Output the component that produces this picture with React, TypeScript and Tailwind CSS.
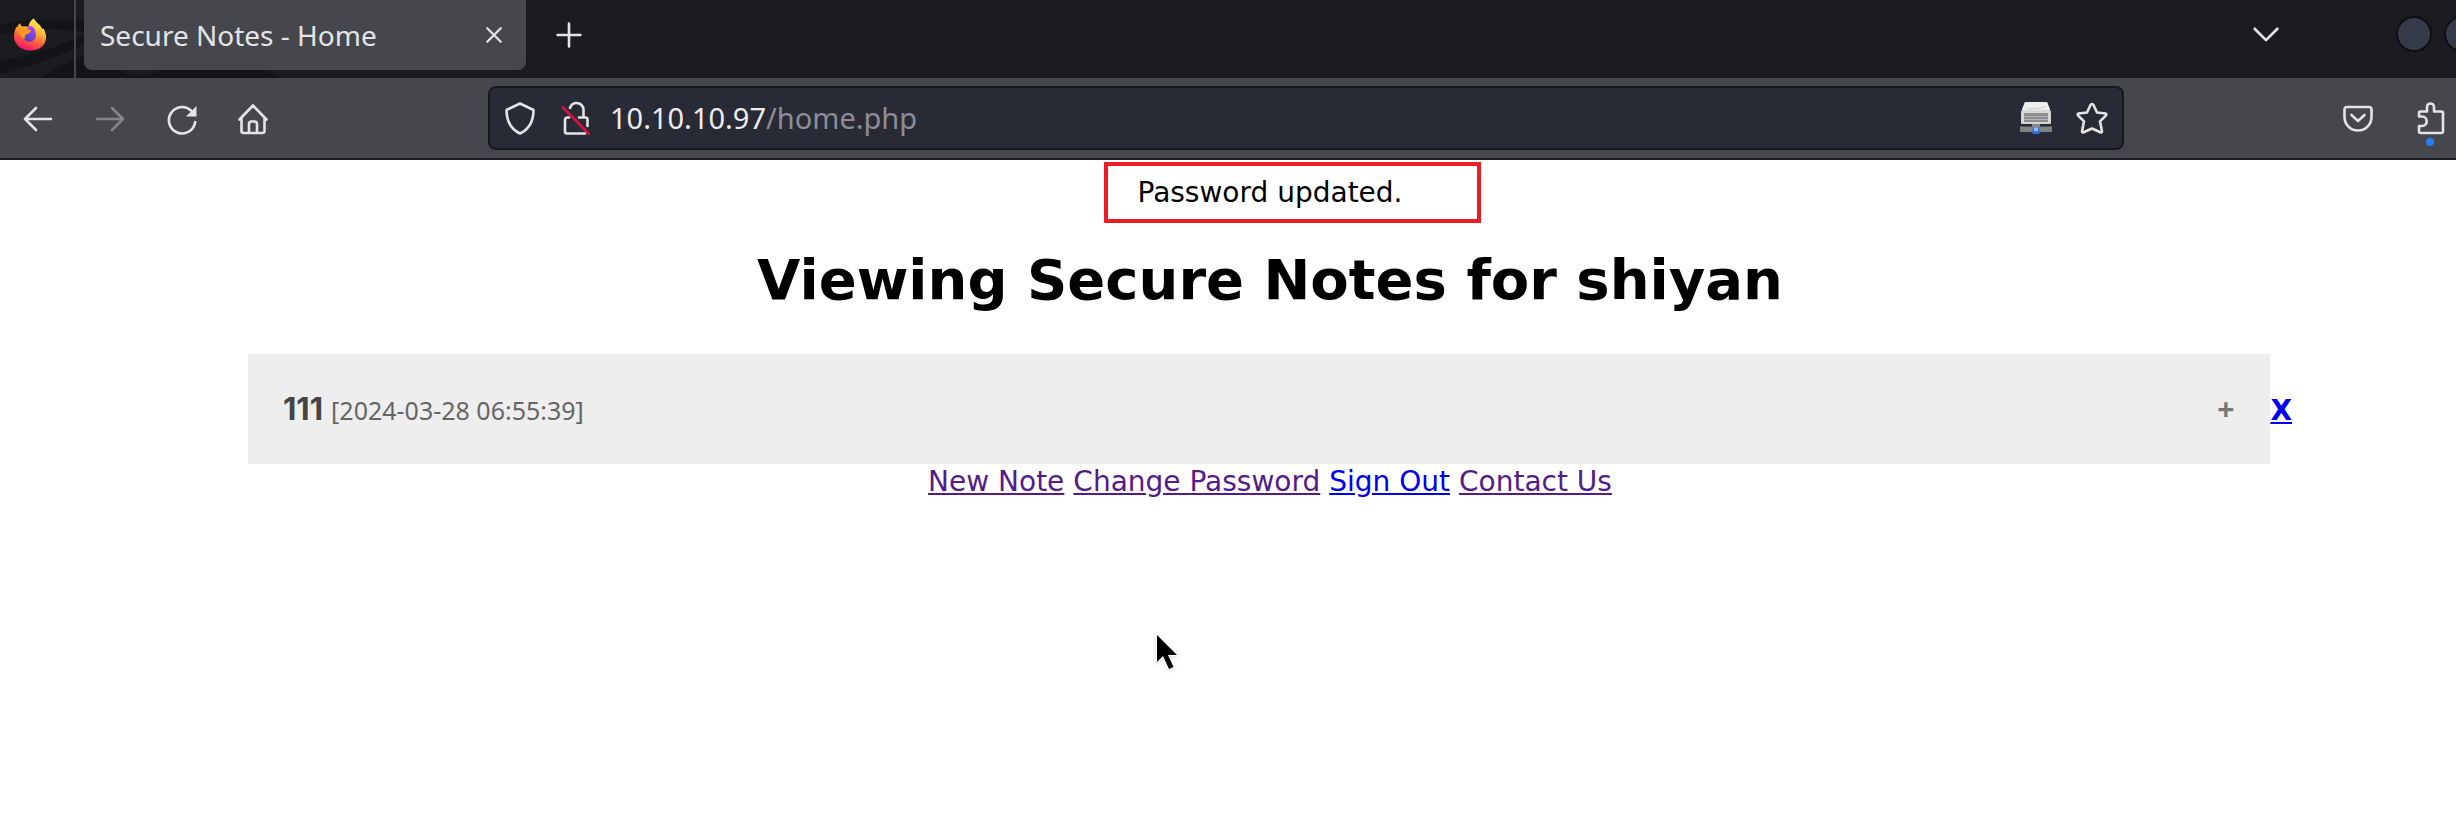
import React from "react";

const iconButton = "flex items-center justify-center text-[#e4e4e5] shrink-0";

function FirefoxLogo() {
  return (
    <svg viewBox="0 0 96 98" className="relative h-[33px] w-8" aria-hidden="true">
      <defs>
        <linearGradient id="flame" x1="0.75" y1="0.05" x2="0.35" y2="1">
          <stop offset="0" stopColor="#fff04a" />
          <stop offset="0.35" stopColor="#ffb936" />
          <stop offset="0.65" stopColor="#ff603c" />
          <stop offset="1" stopColor="#f3106c" />
        </linearGradient>
        <linearGradient id="globe" x1="0.6" y1="0" x2="0.3" y2="1">
          <stop offset="0" stopColor="#b347f5" />
          <stop offset="1" stopColor="#4f3fc4" />
        </linearGradient>
      </defs>
      <path
        d="M60 1c3 8 9 12 16 19 5 5 7 9 8 13l4-3c6 11 9 20 8 31-2 22-22 36-48 36S2 80 0 58c0-13 2-23 8-33l2 3c1-6 4-10 9-13 0 5 2 8 5 10 7-2 13-1 19 1 2-12 8-21 17-25z"
        fill="url(#flame)"
      />
      <path d="M44 24c12-2 21 8 22 24 1 13-8 22-20 22-10 0-17-7-18-16z" fill="url(#globe)" />
      <path d="M14 30c8-5 18-5 24 0 3 3 9 4 13 6-1 7-8 10-15 13-5 3-5 8-2 12-12-1-20-14-20-31z" fill="#ff9a1f" />
    </svg>
  );
}

function Stroke({ d, className = "h-8 w-8", width = 2.6 }: { d: string; className?: string; width?: number }) {
  return (
    <svg viewBox="0 0 32 32" className={`${className} overflow-visible`} fill="none" stroke="currentColor" strokeWidth={width} strokeLinecap="round" strokeLinejoin="round" aria-hidden="true">
      <path d={d} />
    </svg>
  );
}

function ReloadIcon() {
  return (
    <svg viewBox="0 0 32 32" className="h-8 w-8 overflow-visible" fill="none" stroke="currentColor" strokeWidth="2.6" strokeLinecap="round" aria-hidden="true">
      <path d="M29.200 20A13.200 13.200 0 1 1 25 8.500" />
      <path d="M30.500 4v10.500H20z" fill="currentColor" stroke="none" />
    </svg>
  );
}

function LockIcon() {
  return (
    <svg viewBox="0 0 32 34" className="h-[34px] w-8" fill="none" stroke="currentColor" strokeWidth="2.6" strokeLinecap="round" strokeLinejoin="round" aria-hidden="true">
      <path d="M10 7c1-3 3.500-5 6.500-5 4 0 7 3 7 7v7M19 16.500h6.500a2 2 0 0 1 2 2V25M9 16.500h-1.500A2.500 2.500 0 0 0 5 19v11.500a2 2 0 0 0 2 2h18" />
      <path d="M3 6.500 29 33" stroke="#d7123f" />
    </svg>
  );
}

function DriveIcon() {
  return (
    <svg viewBox="0 0 32 32" className="h-8 w-8" aria-hidden="true">
      <path d="M5 0h22l4 10v11a1 1 0 0 1-1 1H2a1 1 0 0 1-1-1V10z" fill="#d6d6d6" />
      <path d="M5 0h22l3 8H2z" fill="#efefef" />
      <path d="M8 6.500c6 1 12 0 17-2" stroke="#c9c9c9" fill="none" />
      <path d="M4 11h24v9H4z" fill="#8e8e8e" />
      <path d="M4 14.500h24M4 17.500h24" stroke="#b4b4b4" />
      <path d="M0 24.500h32v5.500H0z" fill="#828282" />
      <path d="M12 22h8v3h-8z" fill="#8a8a8a" />
      <path d="M12.500 25.500h7V32h-7z" fill="#2f6fe0" />
      <path d="M14 25.500h4v3.500h-4z" fill="#8fb8ff" />
    </svg>
  );
}

function TabStrip() {
  return (
    <header className="relative flex h-[78px] items-center overflow-hidden bg-[#1b1c20]">
      <svg viewBox="0 0 300 78" className="absolute left-0 top-0 h-[78px] w-[300px]" aria-hidden="true">
        <path d="M0 25Q30 18 84 20v12Q40 24 0 35zM0 61Q50 52 84 34v10Q50 62 0 74zM40 78Q62 64 84 56v22z" fill="#131417" />
        <path d="M84 66h26q30 18 50 4h100l24 8H84z" fill="#131417" />
      </svg>
      <div className="relative flex h-full w-[76px] shrink-0 items-center border-r-2 border-[#45474d] pb-[10px] pl-[14px]">
        <FirefoxLogo />
      </div>
      <div className="relative ml-2 flex h-[70px] w-[442px] shrink-0 items-center justify-between self-start rounded-b-lg bg-[#45474d] pl-4 pr-[23px] text-[#e4e4e5]">
        <span className="text-[28px] leading-9">Secure Notes - Home</span>
        <button type="button" aria-label="Close tab" className="flex">
          <Stroke d="M4 4 28 28M28 4 4 28" className="h-[18px] w-[18px]" width={4} />
        </button>
      </div>
      <button type="button" aria-label="New tab" className={`${iconButton} ml-[30px] pb-2`}>
        <Stroke d="M16 2v28M2 16h28" className="h-[26px] w-[26px]" width={3.2} />
      </button>
      <div className="ml-auto flex shrink-0 items-center pb-[10px]">
        <button type="button" aria-label="List all tabs" className={iconButton}>
          <Stroke d="M3 10 16 23 29 10" className="h-7 w-7" width={3} />
        </button>
        <button type="button" aria-label="Minimize" className="ml-[116px] h-9 w-9 rounded-full border-2 border-[#0e0f12] bg-[#363b49]" />
        <button type="button" aria-label="Maximize" className="-mr-6 ml-3 h-9 w-9 rounded-full border-2 border-[#0e0f12] bg-[#363b49]" />
      </div>
    </header>
  );
}

function Toolbar() {
  return (
    <nav aria-label="Browser toolbar" className="flex h-[82px] items-center overflow-hidden border-b-2 border-b-[#1b1c20] bg-[#45474d] pl-[22px]">
      <div className="flex w-[466px] shrink-0 items-center gap-10">
        <button type="button" aria-label="Back" className={iconButton}>
          <Stroke d="M29 17H3M14 6 3 17l11 11" />
        </button>
        <button type="button" aria-label="Forward" className={`${iconButton} opacity-40`}>
          <Stroke d="M3 17h26M18 6l11 11-11 11" />
        </button>
        <button type="button" aria-label="Reload" className={iconButton}>
          <ReloadIcon />
        </button>
        <button type="button" aria-label="Home" className={iconButton}>
          <Stroke d="M1.500 17.500 15 3.500l13.500 14M3.500 16v13a2 2 0 0 0 2 2h19a2 2 0 0 0 2-2V16M11 31V22a2.500 2.500 0 0 1 2.500-2.500h3A2.500 2.500 0 0 1 19 22v9" />
        </button>
      </div>
      <div className="flex h-16 min-w-0 flex-1 items-center rounded-lg border-2 border-[#17181c] bg-[#282a36] px-[14px]">
        <button type="button" aria-label="Tracking protection" className={iconButton}>
          <Stroke d="M16 1.500 29.500 8c0 10-3 18.500-13.500 23.500C5.500 26.500 2.500 18 2.500 8z" />
        </button>
        <button type="button" aria-label="Connection is not secure" className={`${iconButton} ml-6`}>
          <LockIcon />
        </button>
        <div className="ml-[18px] min-w-0 flex-1 text-[29px] leading-10 text-[#8d8e95]">
          <span className="text-[#ececee]">10.10.10.97</span>/home.php
        </div>
        <button type="button" aria-label="Container storage" className={iconButton}>
          <DriveIcon />
        </button>
        <button type="button" aria-label="Bookmark this page" className={`${iconButton} ml-6`}>
          <Stroke d="M16 2q1 0 1.500 1L21 10.500l8.500 1q1.500.5.5 1.800l-6 6 2 10q0 1.700-1.700 1L16 26.500 7.700 30.300q-1.700.7-1.700-1l2-10-6-6q-1-1.300.5-1.800l8.500-1L14.500 3q.5-1 1.500-1z" />
        </button>
      </div>
      <div className="flex w-[332px] shrink-0 items-center justify-end gap-10">
        <button type="button" aria-label="Save to Pocket" className={iconButton}>
          <Stroke d="M5 5h22a2.500 2.500 0 0 1 2.500 2.500V15a13.500 13.500 0 0 1-27 0V7.500A2.500 2.500 0 0 1 5 5zM9.500 13l6.500 6 6.500-6" />
        </button>
        <button type="button" aria-label="Extensions" className={`${iconButton} relative mr-[10px]`}>
          <Stroke d="M5 14.500V11a1.500 1.500 0 0 1 1.500-1.500H13V5a3.500 3.500 0 0 1 7 0v4.500h7.500A1.500 1.500 0 0 1 29 11v18.500a1.500 1.500 0 0 1-1.500 1.500h-21A1.500 1.500 0 0 1 5 29.500V24h3a4.750 4.750 0 0 0 0-9.500z" />
          <span className="absolute -bottom-3 left-3 h-2 w-2 rounded-full bg-[#2a7bff]" />
        </button>
      </div>
    </nav>
  );
}

const links = [
  { label: "New Note", tone: "text-[#551a8b]" },
  { label: "Change Password", tone: "text-[#551a8b]" },
  { label: "Sign Out", tone: "text-[#0000ee]" },
  { label: "Contact Us", tone: "text-[#551a8b]" },
];

export default function App() {
  return (
    <div className="min-h-screen overflow-hidden bg-white font-['Noto_Sans',sans-serif]">
      <TabStrip />
      <Toolbar />
      <main className="relative flex flex-col items-center pl-[248px] pr-[164px] pt-0.5 font-['DejaVu_Sans',sans-serif] text-[28px] leading-9 text-black">
        <p role="status" className="ml-11 w-[377px] border-4 border-[#ed1c24] pb-2 pl-[30px] pt-[9px]">Password updated.</p>
        <h1 className="mt-6 text-[56px] font-bold leading-[66px]">Viewing Secure Notes for shiyan</h1>
        <div className="mt-[41px] flex w-full items-center">
          <button type="button" aria-expanded="false" className="flex h-[110px] min-w-0 flex-1 items-center justify-between bg-[#eeeeee] pl-[35px] pr-9 font-['Noto_Sans',sans-serif]">
            <span className="flex items-baseline gap-2 text-[25px] text-[#666666]">
              <b className="font-['Inter',sans-serif] text-[31px] text-[#444444]">111</b>
              <span>[2024-03-28 06:55:39]</span>
            </span>
            <span className="text-[30px] font-bold text-[#777777]">+</span>
          </button>
          <a href="#delete" className="pt-[3px] font-bold text-[#0000ee] underline">X</a>
        </div>
        <nav aria-label="Account" className="flex gap-[9px]">
          {links.map((link) => (
            <a key={link.label} href="#" className={`${link.tone} underline`}>{link.label}</a>
          ))}
        </nav>
        <svg viewBox="0 0 28 44" className="absolute left-[1154px] top-[472px] h-11 w-7 drop-shadow-sm" aria-hidden="true">
          <path d="M3 3v27l6-6 6 13 4.500-2-5.500-12h9z" fill="#000" stroke="#fff" strokeWidth="2" paintOrder="stroke" />
        </svg>
      </main>
    </div>
  );
}
